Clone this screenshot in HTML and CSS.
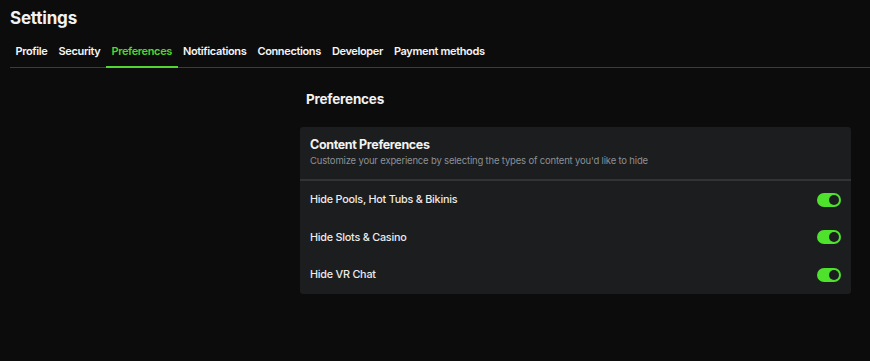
FILE: index.html
```html
<!DOCTYPE html>
<html>
<head>
<meta charset="utf-8">
<link rel="stylesheet" href="styles.css">
</head>
<body>
<div class="page">
  <h1 class="title">Settings</h1>
  <nav class="tabs">
    <a class="tab">Profile</a>
    <a class="tab">Security</a>
    <a class="tab active">Preferences</a>
    <a class="tab">Notifications</a>
    <a class="tab">Connections</a>
    <a class="tab">Developer</a>
    <a class="tab">Payment methods</a>
  </nav>
  <main class="main">
    <div class="spacer"></div>
    <section class="content">
      <h2 class="section-title">Preferences</h2>
      <div class="card">
        <div class="card-head">
          <div class="card-title">Content Preferences</div>
          <div class="card-sub">Customize your experience by selecting the types of content you'd like to hide</div>
        </div>
        <div class="row"><span>Hide Pools, Hot Tubs &amp; Bikinis</span><span class="toggle"><span class="knob"></span></span></div>
        <div class="row"><span>Hide Slots &amp; Casino</span><span class="toggle"><span class="knob"></span></span></div>
        <div class="row"><span>Hide VR Chat</span><span class="toggle"><span class="knob"></span></span></div>
      </div>
    </section>
  </main>
</div>
</body>
</html>
```

FILE: styles.css
```css
* { box-sizing: border-box; }
html, body { margin: 0; padding: 0; }
body {
  background: #0c0c0c;
  color: #f2f2f2;
  font-family: Inter, "Liberation Sans", sans-serif;
  width: 870px;
  height: 361px;
  overflow: hidden;
}
.page { padding: 0 0 0 10px; }
.title {
  margin: 0;
  padding-top: 7px;
  height: 34px;
  font-size: 17px;
  font-weight: 700;
  letter-spacing: -0.2px;
  line-height: 22px;
}
.tabs {
  display: flex;
  border-bottom: 1px solid #3a3c3e;
  height: 34px;
  align-items: stretch;
}
.tab {
  display: flex;
  align-items: center;
  padding: 1px 5.5px 0;
  font-size: 11px;
  font-weight: 600;
  letter-spacing: -0.36px;
  color: #f5f5f5;
  border-bottom: 2px solid transparent;
  margin-bottom: -1px;
}
.tab.active {
  color: #53d632;
  border-bottom-color: #53d632;
}
.main {
  display: flex;
  padding-top: 21px;
}
.spacer { width: 290px; flex: none; }
.content { width: 551px; }
.section-title {
  margin: 0 0 18px 6px;
  font-size: 13.5px;
  font-weight: 700;
  letter-spacing: -0.2px;
  line-height: 20px;
}
.card {
  background: #1b1d1f;
  border-radius: 3px;
}
.card-head {
  padding: 9px 10px 10px;
  border-bottom: 2px solid #313335;
}
.card-title {
  font-size: 12.5px;
  font-weight: 700;
  letter-spacing: -0.35px;
  line-height: 17px;
}
.card-sub {
  font-size: 9.5px;
  color: #8d9094;
  line-height: 16px;
  letter-spacing: -0.18px;
}
.row {
  display: flex;
  align-items: center;
  justify-content: space-between;
  height: 37.5px;
  padding: 0 10px;
  font-size: 10.8px;
  font-weight: 500;
  letter-spacing: -0.22px;
  color: #ececec;
}
.toggle {
  width: 24px;
  height: 14px;
  border-radius: 7px;
  background: #4fe22d;
  display: flex;
  align-items: center;
  justify-content: flex-end;
  padding: 0 2px;
}
.knob {
  width: 10px;
  height: 10px;
  border-radius: 50%;
  background: #1b1d1f;
}
```
